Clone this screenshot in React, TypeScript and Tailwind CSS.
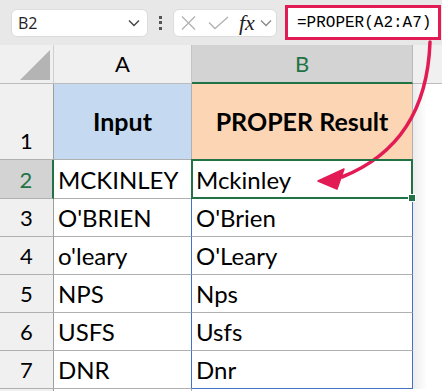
import React from "react";

const GRID = "border-[#b0b0b0]";
const BLUE = "border-[#4472c4]";

function Cell({ children, className = "" }: { children?: React.ReactNode; className?: string }) {
  return <div className={`flex items-end pl-[4px] pb-[6px] text-[24px] leading-none text-black ${className}`}>{children}</div>;
}

function RowHead({ n, className = "" }: { n: number; className?: string }) {
  return (
    <div className={`flex items-end justify-center pb-[7px] text-[22px] leading-none border-r border-b border-r-[#9e9e9e] ${GRID} ${className}`}>
      {n}
    </div>
  );
}

export default function App() {
  const rows: [string, string][] = [
    ["O'BRIEN", "O'Brien"],
    ["o'leary", "O'Leary"],
    ["NPS", "Nps"],
    ["USFS", "Usfs"],
    ["DNR", "Dnr"],
  ];
  return (
    <div className="relative w-[442px] h-[391px] overflow-hidden bg-white" style={{ fontFamily: "Lato, 'Open Sans', sans-serif" }}>
      {/* formula bar */}
      <div className="h-[45px] bg-[#e8e8e8] flex items-center" style={{ fontFamily: "'Open Sans', 'Noto Sans', sans-serif" }}>
        <div className="ml-[11px] w-[137px] h-[28px] bg-white rounded-[6px] border border-[#dcdcdc] flex items-center justify-between pl-[6px] pr-[7px]">
          <span className="text-[16px] text-[#222]">B2</span>
          <svg width="12" height="8" viewBox="0 0 12 8"><path d="M1 1.5 L6 6.5 L11 1.5" fill="none" stroke="#444" strokeWidth="1.4" /></svg>
        </div>
        <div className="ml-[11px] w-[3px] flex flex-col gap-[2.5px]">
          <div className="w-[3px] h-[3px] bg-[#555]" />
          <div className="w-[3px] h-[3px] bg-[#555]" />
          <div className="w-[3px] h-[3px] bg-[#555]" />
        </div>
        <div className="ml-[11px] w-[104px] h-[28px] bg-white rounded-[6px] border border-[#dcdcdc] flex items-center pl-[7px]">
          <svg width="15" height="14" viewBox="0 0 15 14"><path d="M1 0.5 L14 13.5 M14 0.5 L1 13.5" stroke="#b3b3b3" strokeWidth="1.4" fill="none" /></svg>
          <svg className="ml-[12px]" width="21" height="14" viewBox="0 0 21 14"><path d="M1 6.5 L7 12.5 L20 1" stroke="#b3b3b3" strokeWidth="1.4" fill="none" /></svg>
          <span className="ml-[10px] text-[22px] italic text-[#222] leading-none" style={{ fontFamily: "'Liberation Serif', 'DejaVu Serif', serif" }}>fx</span>
          <svg className="ml-[5px]" width="12" height="8" viewBox="0 0 12 8"><path d="M1 1.5 L6 6.5 L11 1.5" fill="none" stroke="#888" strokeWidth="1.3" /></svg>
        </div>
        <div className="ml-[8px] w-[156px] h-[35px] bg-white border-[3px] border-[#e31b54] flex items-center pl-[9px]">
          <span className="text-[16px] text-black" style={{ fontFamily: "'Liberation Mono', monospace" }}>=PROPER(A2:A7)</span>
        </div>
      </div>

      {/* sheet */}
      <div className="grid grid-cols-[54px_138px_221px_1fr] grid-rows-[39px_76px_39px_38px_38px_38px_38px_38px_1fr] h-[346px]">
        {/* header row */}
        <div className="relative bg-[#f0f0f0] border-r border-b border-r-[#d0d0d0] border-b-[#bcbcbc]">
          <svg className="absolute left-[20px] top-[5px]" width="31" height="30" viewBox="0 0 31 30"><path d="M30 0 L30 30 L0 30 Z" fill="#b4b4b4" /></svg>
        </div>
        <div className="bg-[#f0f0f0] border-r border-b border-r-[#c4c4c4] border-b-[#bcbcbc] flex items-center justify-center text-[22px] leading-none text-black">A</div>
        <div className="bg-[#d3d3d3] border-r border-r-[#b8b8b8] border-b-2 border-b-[#217346] flex items-center justify-center text-[22px] leading-none text-[#217346]">B</div>
        <div className="bg-[#f0f0f0] border-b border-b-[#bcbcbc]" />

        {/* row 1 */}
        <RowHead n={1} className="bg-[#f0f0f0]" />
        <div className={`bg-[#c5d9f1] border-r border-b ${GRID} flex items-center justify-center text-[25px] font-bold leading-none text-black`}>Input</div>
        <div className={`bg-[#fcd5b4] border-r border-b ${GRID} flex items-center justify-center text-[25px] font-bold leading-none text-black`}>PROPER Result</div>
        <div className="bg-[linear-gradient(to_right,#ececec,#ffffff_14px)]" />

        {/* row 2 */}
        <div className={`bg-[#d3d3d3] border-r-2 border-r-[#217346] border-b ${GRID} flex items-end justify-center pb-[7px] text-[22px] leading-none text-[#217346]`}>2</div>
        <Cell className={`border-r border-b ${GRID}`}>MCKINLEY</Cell>
        <div className={`relative border-r border-b ${GRID} flex items-end pl-[4px] pb-[6px] text-[24px] leading-none text-black`}>
          Mckinley
          <div className="absolute -inset-[1px] border-2 border-[#217346] z-10">
            <div className="absolute -right-[4px] -bottom-[4px] w-[6px] h-[6px] bg-[#217346] outline outline-1 outline-white" />
          </div>
        </div>
        <div className="bg-[linear-gradient(to_right,#ececec,#ffffff_14px)]" />

        {rows.map(([a, b], i) => {
          const last = i === rows.length - 1;
          return (
            <React.Fragment key={a}>
              <RowHead n={i + 3} className="bg-[#f0f0f0]" />
              <Cell className={`border-r border-b border-r-[#4472c4] ${GRID}`}>{a}</Cell>
              <Cell className={`border-r border-b border-r-[#4472c4] ${last ? BLUE : GRID}`}>{b}</Cell>
              <div className="bg-[linear-gradient(to_right,#ececec,#ffffff_14px)]" />
            </React.Fragment>
          );
        })}
        <div className="bg-[#f0f0f0] border-r border-r-[#9e9e9e]" />
        <div className="border-r border-[#b0b0b0]" />
        <div />
        <div />
      </div>

      {/* annotation arrow */}
      <svg className="absolute inset-0 pointer-events-none" width="442" height="391" viewBox="0 0 442 391">
        <path d="M430 42 C428 100 405 152 342 177" fill="none" stroke="#e31b54" strokeWidth="3.5" strokeLinecap="round" />
        <path d="M318 181 L344 169 L337 189 Z" fill="#e31b54" stroke="#e31b54" strokeWidth="1.5" strokeLinejoin="round" />
      </svg>
    </div>
  );
}
